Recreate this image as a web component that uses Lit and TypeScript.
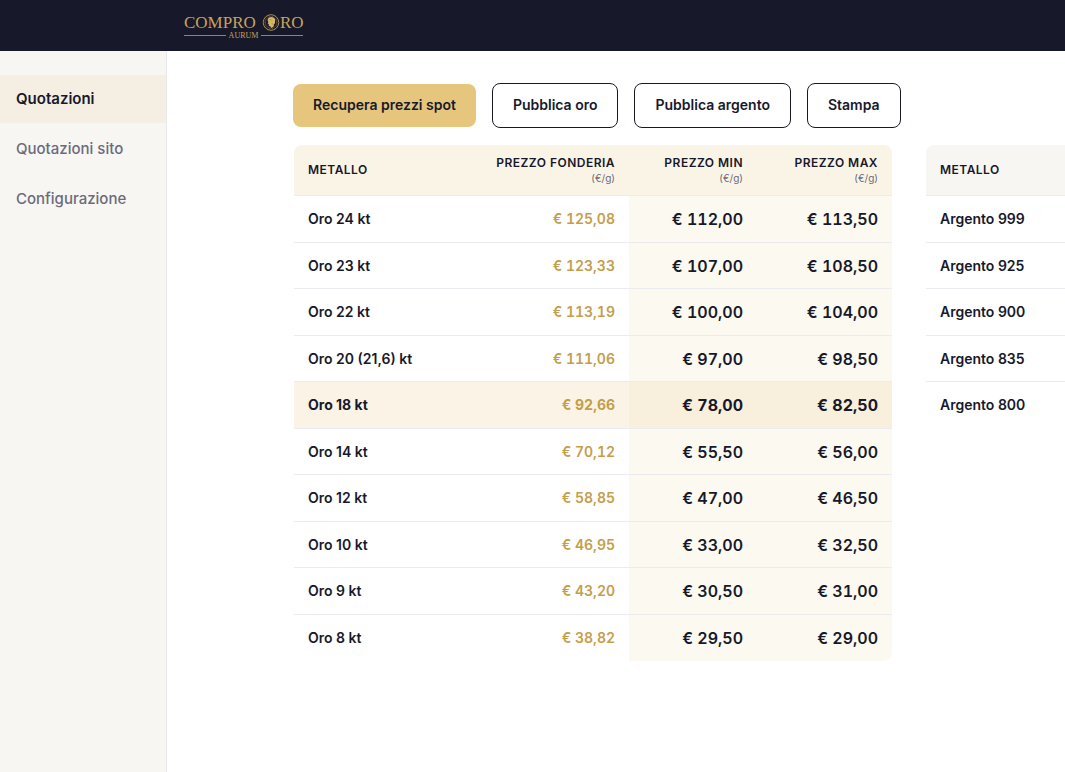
import { LitElement, html, css, svg, nothing } from 'lit';
import { customElement, property, state } from 'lit/decorators.js';
import { classMap } from 'lit/directives/class-map.js';

interface Quote {
  metal: string;
  foundry?: string;
  min?: string;
  max?: string;
  featured?: boolean;
}

const GOLD: Quote[] = [
  { metal: 'Oro 24 kt', foundry: '125,08', min: '112,00', max: '113,50' },
  { metal: 'Oro 23 kt', foundry: '123,33', min: '107,00', max: '108,50' },
  { metal: 'Oro 22 kt', foundry: '113,19', min: '100,00', max: '104,00' },
  { metal: 'Oro 20 (21,6) kt', foundry: '111,06', min: '97,00', max: '98,50' },
  { metal: 'Oro 18 kt', foundry: '92,66', min: '78,00', max: '82,50', featured: true },
  { metal: 'Oro 14 kt', foundry: '70,12', min: '55,50', max: '56,00' },
  { metal: 'Oro 12 kt', foundry: '58,85', min: '47,00', max: '46,50' },
  { metal: 'Oro 10 kt', foundry: '46,95', min: '33,00', max: '32,50' },
  { metal: 'Oro 9 kt', foundry: '43,20', min: '30,50', max: '31,00' },
  { metal: 'Oro 8 kt', foundry: '38,82', min: '29,50', max: '29,00' },
];

const SILVER: Quote[] = ['999', '925', '900', '835', '800'].map((n) => ({ metal: `Argento ${n}` }));

@customElement('brand-logo')
export class BrandLogo extends LitElement {
  static styles = css`
    :host { display: block; line-height: 0; }
    .word { font-family: "Liberation Serif", serif; font-size: 17px; fill: #c6a45c; }
    .sub { font-family: "Liberation Serif", serif; font-size: 8px; fill: #c6a45c; }
  `;

  render() {
    const ticks = Array.from({ length: 24 }, (_, i) => i * 15);
    return html`
      <svg width="120" height="28" viewBox="0 0 120 28" role="img" aria-label="Compro Oro Aurum">
        <text class="word" x="0" y="17">COMPRO</text>
        <text class="word" x="96" y="17">RO</text>
        <circle cx="87" cy="11.500" r="7.800" fill="#17192b" stroke="#a38a56" stroke-width="1" />
        ${ticks.map((a) => svg`<path d="M87 4.9v1.4" stroke="#8f794d" stroke-width=".6" transform="rotate(${a} 87 11.5)" />`)}
        <path d="M83.700 8.400c.6-2.400 4-3.400 5.900-1.600 1.600.6 2 2.400 1.300 3.600.5 1.400-.2 2.500-1.200 3l.2 1.500c-.8 1.100-1.800 1.800-2.700 2.200l-1-1.900-1.500-.3.1-1.700-1.100-.6.700-1.500c-.7-.9-.9-1.800-.7-2.700z" fill="#d8b667" />
        <path d="M85.500 9.200c1-.7 2-.5 2.800.2M87.500 12.300l1.500 1" stroke="#8a6f38" stroke-width=".5" fill="none" />
        <path d="M0 24.500h42M77 24.500h42" stroke="#9c8353" stroke-width="1" />
        <text class="sub" x="59.500" y="27" text-anchor="middle">AURUM</text>
      </svg>
    `;
  }
}

@customElement('quote-table')
export class QuoteTable extends LitElement {
  @property({ attribute: false }) rows: Quote[] = [];
  @property({ type: Boolean }) prices = false;
  @property() tone: 'gold' | 'silver' = 'gold';

  static styles = css`
    :host { display: block; }
    .table {
      width: 100%;
      table-layout: fixed;
      border-collapse: separate;
      border-spacing: 0;
      border-radius: 8px;
      overflow: hidden;
      color: #17192b;
      font-size: 14px;
      line-height: 26px;
    }
    .foundry-col { width: 30%; }
    .min-col { width: 128px; }
    .max-col { width: 135px; }
    .head {
      height: 51px;
      box-sizing: border-box;
      padding: 0 14px;
      border-bottom: 1px solid #ececf0;
      background: #faf4e6;
      font-size: 12px;
      font-weight: 600;
      line-height: 16px;
      letter-spacing: 0.04em;
      text-align: right;
      white-space: nowrap;
    }
    .silver .head { background: #f7f6f2; }
    .head.metal { text-align: left; }
    .unit {
      display: block;
      color: #6b6b7b;
      font-size: 10px;
      font-weight: 400;
      line-height: 15px;
      letter-spacing: normal;
    }
    .cell {
      padding: 10px 14px;
      border-bottom: 1px solid #ececf0;
      font-weight: 600;
      text-align: right;
      white-space: nowrap;
    }
    .row:nth-child(even) .cell { padding-bottom: 9px; }
    .row:last-child .cell { border-bottom-color: transparent; }
    .cell.metal { text-align: left; }
    .cell.foundry { color: #c49e4b; font-variant-numeric: tabular-nums; }
    .cell.retail { background: #fcf9f0; font-size: 16px; font-variant-numeric: tabular-nums; }
    .featured .cell { background: #fbf4e6; font-weight: 700; }
    .featured .cell.retail { background: #f8efdc; }
    .row:last-child .cell.retail:last-child { border-bottom-right-radius: 8px; }
  `;

  render() {
    return html`
      <table class="table ${this.tone}">
        ${this.prices
          ? html`<colgroup><col /><col class="foundry-col" /><col class="min-col" /><col class="max-col" /></colgroup>`
          : nothing}
        <thead>
          <tr>
            <th class="head metal" scope="col">METALLO</th>
            ${this.prices
              ? ['PREZZO FONDERIA', 'PREZZO MIN', 'PREZZO MAX'].map(
                  (label) => html`<th class="head" scope="col">${label}<span class="unit">(€/g)</span></th>`,
                )
              : nothing}
          </tr>
        </thead>
        <tbody>
          ${this.rows.map(
            (q) => html`<tr class=${classMap({ row: true, featured: !!q.featured })}>
              <td class="cell metal">${q.metal}</td>
              ${this.prices
                ? html`<td class="cell foundry">€ ${q.foundry}</td>
                    <td class="cell retail">€ ${q.min}</td>
                    <td class="cell retail">€ ${q.max}</td>`
                : nothing}
            </tr>`,
          )}
        </tbody>
      </table>
    `;
  }
}

@customElement('app-root')
export class AppRoot extends LitElement {
  @state() private current = 'Quotazioni';

  static styles = css`
    :host {
      display: flex;
      flex-direction: column;
      min-height: 100vh;
      background: #fff;
      color: #17192b;
      font-family: Inter, "Liberation Sans", sans-serif;
    }
    .topbar { padding: 11px 184px 12px; background: #17192b; }
    .body { display: flex; flex: 1; }
    .sidebar {
      flex: 0 0 166px;
      padding-top: 24px;
      background: #f7f6f2;
      border-right: 1px solid #e8e8ec;
    }
    .menu { display: grid; gap: 2px; }
    .link {
      padding: 12px 16px;
      color: #6b6b7b;
      font-size: 15px;
      font-weight: 500;
      line-height: 24px;
      text-decoration: none;
    }
    .link.active { background: #f4efe2; color: #17192b; font-weight: 600; }
    .main { flex: 1; min-width: 0; overflow: hidden; padding: 32px 0 32px 126px; }
    .actions { display: flex; align-items: center; gap: 16px; }
    .btn {
      padding: 10px 20px 11px;
      border: 1px solid #17192b;
      border-radius: 8px;
      background: #fff;
      color: #17192b;
      font: 600 14px/22px Inter, "Liberation Sans", sans-serif;
      white-space: nowrap;
    }
    .btn.primary { border: 0; background: #e5c67c; }
    .tables { display: flex; align-items: flex-start; gap: 34px; padding: 17px 1px 0; }
    .panel { flex: 1 0 598px; }
  `;

  private select(event: Event, name: string) {
    event.preventDefault();
    this.current = name;
  }

  render() {
    return html`
      <header class="topbar"><brand-logo></brand-logo></header>
      <div class="body">
        <aside class="sidebar">
          <nav class="menu">
            ${['Quotazioni', 'Quotazioni sito', 'Configurazione'].map(
              (name) => html`<a
                href="#"
                class=${classMap({ link: true, active: name === this.current })}
                @click=${(e: Event) => this.select(e, name)}
                >${name}</a
              >`,
            )}
          </nav>
        </aside>
        <main class="main">
          <div class="actions">
            <button class="btn primary" type="button">Recupera prezzi spot</button>
            <button class="btn" type="button">Pubblica oro</button>
            <button class="btn" type="button">Pubblica argento</button>
            <button class="btn" type="button">Stampa</button>
          </div>
          <div class="tables">
            <quote-table class="panel" prices .rows=${GOLD}></quote-table>
            <quote-table class="panel" tone="silver" .rows=${SILVER}></quote-table>
          </div>
        </main>
      </div>
    `;
  }
}
